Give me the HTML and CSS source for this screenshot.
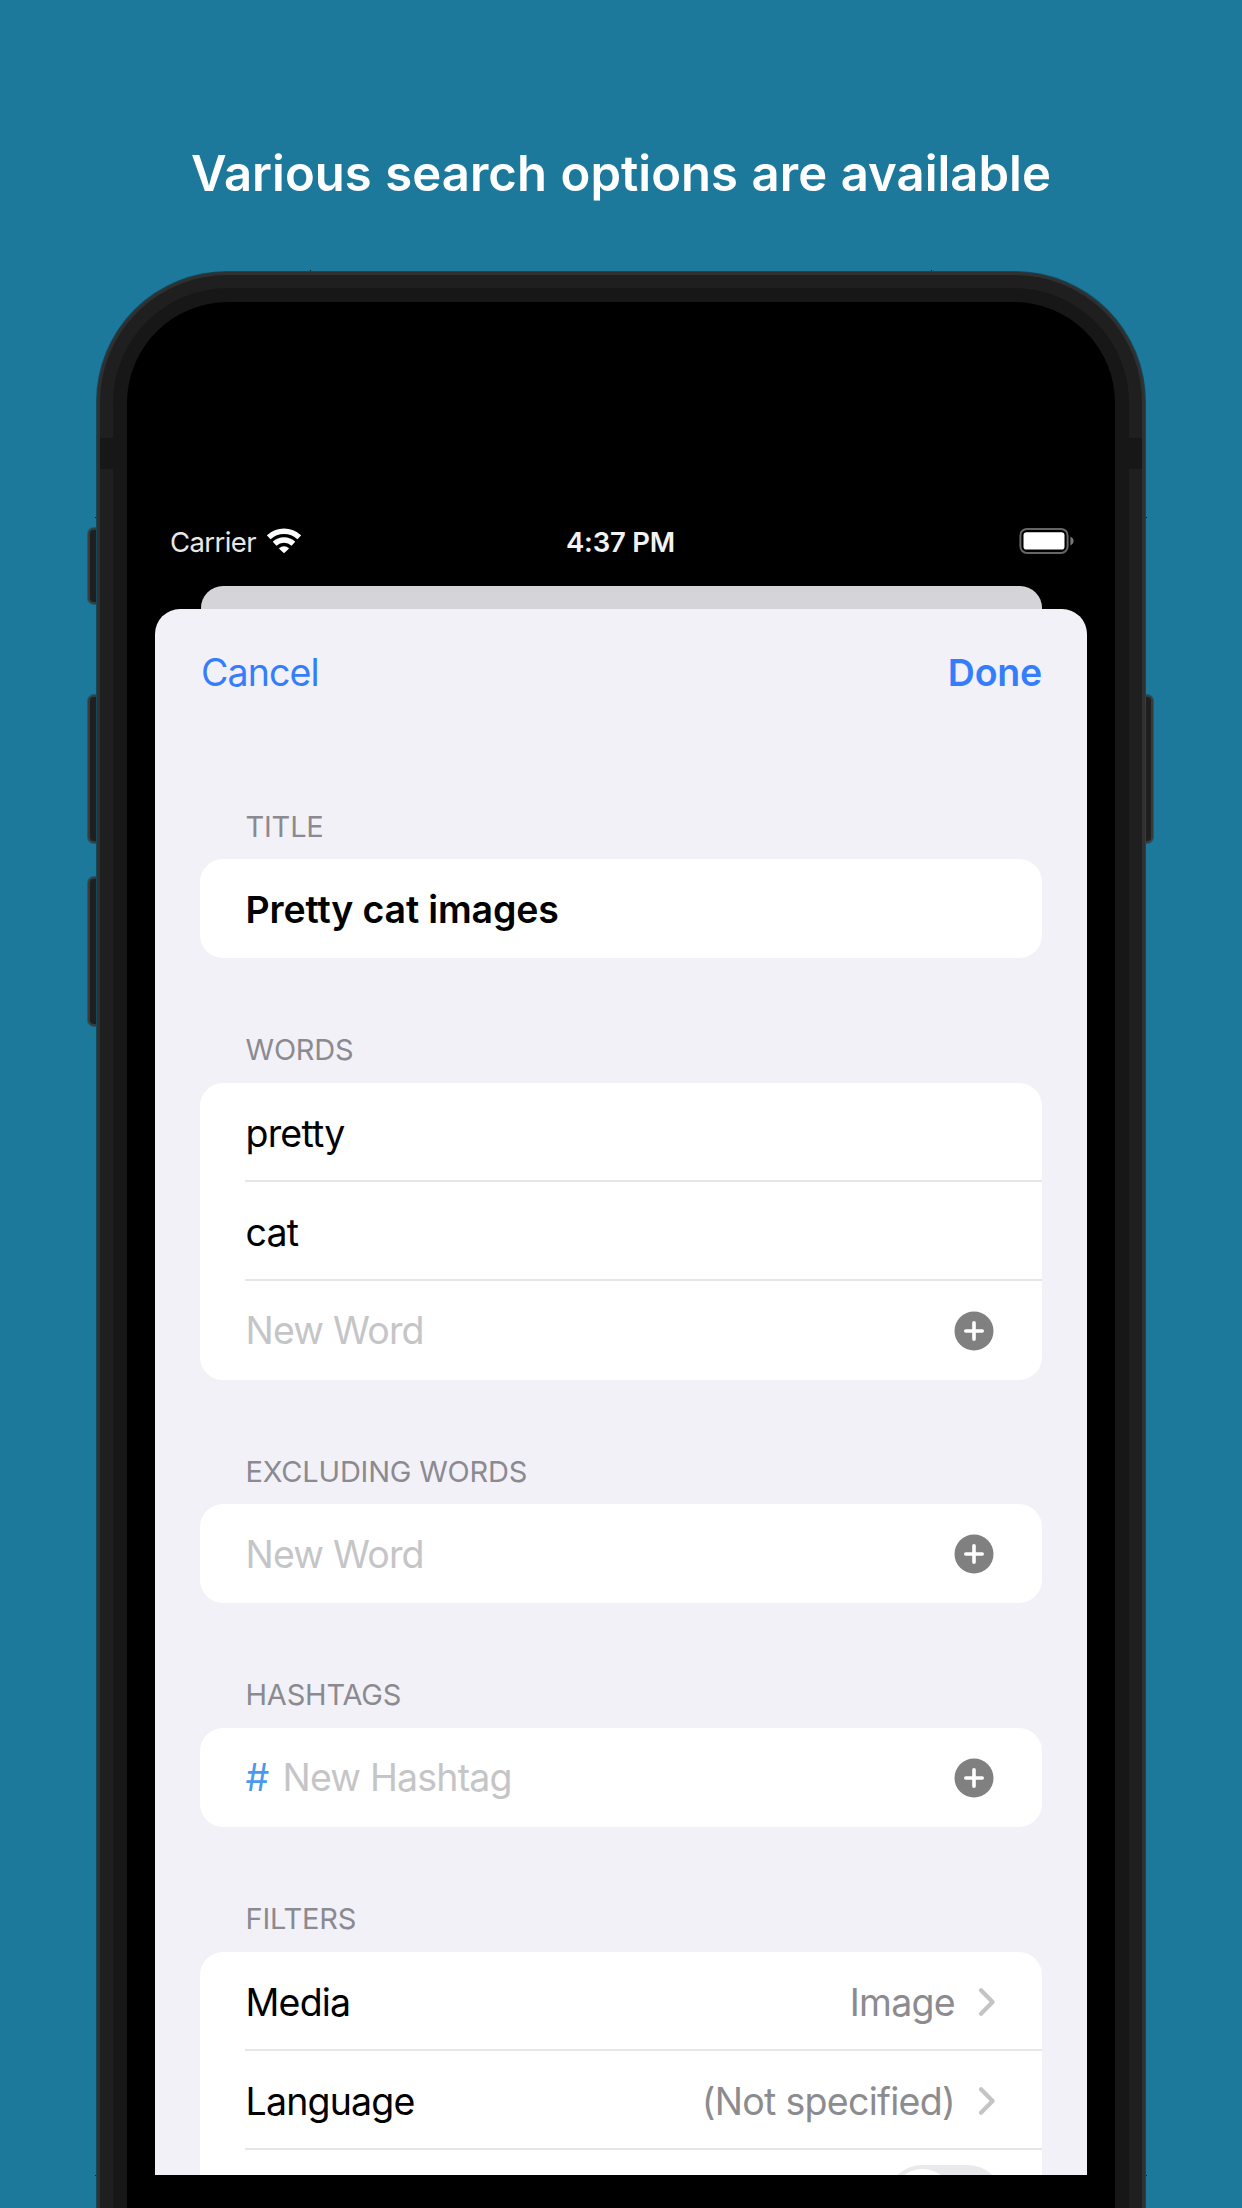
FILE: index.html
```html
<!DOCTYPE html>
<html lang="en">
<head>
<meta charset="utf-8">
<title>Various search options are available</title>
<link rel="stylesheet" href="styles.css">
</head>
<body>
<svg class="defs" aria-hidden="true">
  <symbol id="plus" viewBox="0 0 40 40">
    <circle cx="20" cy="20" r="19.5" fill="#808080"/>
    <path d="M20 11.8v16.4M11.8 20h16.4" stroke="#fff" stroke-width="3.6" stroke-linecap="round"/>
  </symbol>
  <symbol id="chevron" viewBox="0 0 18 30">
    <path d="M3 3.2 14.6 15 3 26.8" fill="none" stroke="#c4c4c7" stroke-width="4.2" stroke-linecap="round" stroke-linejoin="round"/>
  </symbol>
</svg>

<main class="page">
  <h1 class="headline">Various search options are available</h1>

  <div class="phone">
    <i class="button mute"></i>
    <i class="button volume-up"></i>
    <i class="button volume-down"></i>
    <i class="button power"></i>
    <i class="tick tick-top-left"></i>
    <i class="tick tick-top-right"></i>
    <i class="tick tick-left"></i>
    <i class="tick tick-right"></i>
    <i class="tick tick-left low"></i>
    <i class="tick tick-right low"></i>
    <div class="frame">
      <i class="antenna left"></i>
      <i class="antenna right"></i>
      <div class="bezel">
        <div class="glass">
          <div class="screen">
            <div class="status">
              <div class="carrier">
                <span>Carrier</span>
                <svg class="wifi" viewBox="0 0 34 26">
                  <g fill="none" stroke="#fff" stroke-width="5.4">
                    <path d="M1.7 9.3a22.2 22.2 0 0 1 30.6 0"/>
                    <path d="M7.6 15.8a13.6 13.6 0 0 1 18.8 0"/>
                  </g>
                  <path d="M17 25.2 11.9 20.4a7.4 7.4 0 0 1 10.2 0z" fill="#fff"/>
                </svg>
              </div>
              <span class="time">4:37 PM</span>
              <svg class="battery" viewBox="0 0 56 28">
                <rect x="1.4" y="1.9" width="47.2" height="24" rx="6.5" fill="none" stroke="#666" stroke-width="2"/>
                <rect x="4.5" y="5.2" width="41" height="17.4" rx="3.2" fill="#fff"/>
                <path d="M51.4 9.6q3.2 1.6 3.2 4.4t-3.2 4.4z" fill="#777"/>
              </svg>
            </div>

            <div class="backdrop-card"></div>

            <section class="sheet">
              <header class="toolbar">
                <span>Cancel</span>
                <strong>Done</strong>
              </header>

              <h2 class="label">Title</h2>
              <div class="card">
                <div class="row title">Pretty cat images</div>
              </div>

              <h2 class="label">Words</h2>
              <div class="card">
                <div class="row">pretty</div>
                <div class="row">cat</div>
                <div class="row"><span class="placeholder">New Word</span><svg class="plus"><use href="#plus"/></svg></div>
              </div>

              <h2 class="label">Excluding words</h2>
              <div class="card">
                <div class="row"><span class="placeholder">New Word</span><svg class="plus"><use href="#plus"/></svg></div>
              </div>

              <h2 class="label">Hashtags</h2>
              <div class="card">
                <div class="row"><span class="hash">#</span><span class="placeholder">New Hashtag</span><svg class="plus"><use href="#plus"/></svg></div>
              </div>

              <h2 class="label filters">Filters</h2>
              <div class="card">
                <div class="row">Media<span class="value">Image</span><svg class="chevron"><use href="#chevron"/></svg></div>
                <div class="row">Language<span class="value">(Not specified)</span><svg class="chevron"><use href="#chevron"/></svg></div>
                <div class="row"><span class="toggle"><i></i></span></div>
              </div>
            </section>
          </div>
        </div>
      </div>
    </div>
  </div>
</main>
</body>
</html>
```
FILE: styles.css
```css
* { box-sizing: border-box; }

body {
  margin: 0;
  font-family: Inter, "Liberation Sans", sans-serif;
  font-feature-settings: "calt" 0;
  background: #1c799b;
}

.defs { display: none; }

.page {
  width: 1242px;
  height: 2208px;
  overflow: hidden;
  display: flex;
  flex-direction: column;
  align-items: center;
}

.headline {
  flex: none;
  height: 272px;
  margin: 0;
  padding-top: 144px;
  font-size: 49px;
  line-height: 60px;
  font-weight: 600;
  letter-spacing: 0.03px;
  word-spacing: 1.2px;
  color: #fff;
  white-space: nowrap;
}

/* Device body */
.phone {
  position: relative;
  flex: none;
  width: 1048px;
  height: 2100px;
}

.frame {
  position: relative;
  height: 100%;
  padding: 13px;
  border: 3px solid #303030;
  border-radius: 130px;
  background: #1f1f1f;
  box-shadow: 0 0 0 1px #15485b;
}

.bezel {
  height: 100%;
  padding: 14px;
  border-radius: 115px;
  background: #171717;
}

.glass {
  height: 100%;
  padding: 0 28px;
  border-radius: 101px;
  background: #000;
}

.antenna {
  position: absolute;
  top: 163px;
  width: 14px;
  height: 31px;
  background: #171717;
}
.antenna.left { left: 0; }
.antenna.right { right: 0; }

.button {
  position: absolute;
  left: -9px;
  width: 16px;
  border: 2px solid #3a3a38;
  border-radius: 6px;
  background: #1f1f1f;
  box-shadow: 0 0 0 1px #1d5b72;
}
.mute { top: 256px; height: 76px; }
.volume-up { top: 423px; height: 148px; }
.volume-down { top: 605px; height: 149px; }
.power { left: auto; right: -8px; top: 423px; height: 148px; }

.tick {
  position: absolute;
  width: 3px;
  height: 1px;
  background: #0b1c22;
}
.tick-top-left, .tick-top-right { top: -2px; width: 1px; height: 3px; }
.tick-top-left { left: 213px; }
.tick-top-right { right: 213px; }
.tick-left { left: -2px; top: 245px; }
.tick-right { right: -2px; top: 245px; }
.tick.low { top: 1903px; }

/* Screen content */
.screen {
  display: flex;
  flex-direction: column;
  width: 932px;
  height: 1873px;
  overflow: hidden;
  padding-top: 211px;
}

.status {
  flex: none;
  display: grid;
  grid-template-columns: 1fr auto 1fr;
  align-items: center;
  height: 57px;
  padding: 0 12px 0 15px;
  color: #e8e8e8;
  font-size: 27.5px;
}
.carrier {
  display: flex;
  align-items: center;
  gap: 11px;
  letter-spacing: -0.6px;
}
.wifi { width: 34px; height: 26px; margin-bottom: 2px; }
.time {
  margin: 0 2px 0 -2px;
  font-weight: 600;
  letter-spacing: -0.2px;
  color: #f2f2f2;
}
.battery { justify-self: end; width: 56px; height: 28px; margin-bottom: 1px; }

.backdrop-card {
  flex: none;
  width: 841px;
  height: 38px;
  margin: 16px auto -15px;
  border-radius: 22px 22px 0 0;
  background: #d5d4d9;
}

.sheet {
  flex: none;
  position: relative;
  height: 1700px;
  padding: 0 45px;
  border-radius: 25px 25px 0 0;
  background: #f2f1f8;
}

.toolbar {
  display: flex;
  justify-content: space-between;
  height: 125.5px;
  padding: 41px 0 0 1px;
  font-size: 37.5px;
  line-height: 46px;
  letter-spacing: -0.9px;
  color: #357efb;
}
.toolbar strong { font-weight: 600; letter-spacing: -0.2px; }

.label {
  height: 124.5px;
  margin: 0;
  padding: 74px 45.5px 0;
  font-size: 29px;
  line-height: 36px;
  font-weight: 400;
  letter-spacing: -0.2px;
  text-transform: uppercase;
  color: #8b8a90;
}
.label.filters { height: 125px; }

.card {
  border-radius: 23px;
  background: #fff;
}

.row {
  display: flex;
  align-items: center;
  height: 99px;
  margin-left: 45px;
  padding: 1px 46px 0 0.5px;
  font-size: 37.5px;
  letter-spacing: -0.8px;
  color: #000;
}
.row:not(:last-child) {
  padding-top: 4px;
  border-bottom: 2px solid #e6e6e8;
}
.row.title { font-weight: 600; letter-spacing: -0.15px; }

.placeholder { color: #c5c5c7; }
.hash { width: 37px; color: #4a98f0; }
.value { margin-left: auto; color: #8b8b90; letter-spacing: -0.7px; }

.plus { width: 40px; height: 40px; margin: 0 2px 0 auto; }
.chevron { width: 18px; height: 30px; margin-left: 23px; }

.toggle {
  width: 116px;
  height: 70px;
  margin: 0 -7px 0 auto;
  padding: 4.5px;
  border-radius: 35px;
  background: #e9e9eb;
}
.toggle i {
  display: block;
  width: 61px;
  height: 61px;
  border-radius: 50%;
  background: #fff;
}
```
